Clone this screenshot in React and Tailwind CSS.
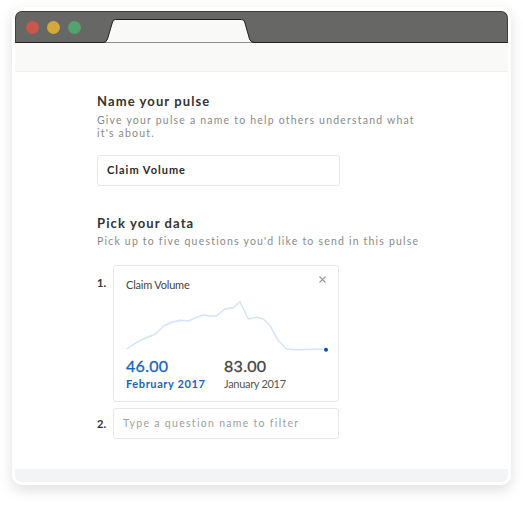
import React from "react";

const font = { fontFamily: "Lato, 'Open Sans', sans-serif" };

const chartPoints = [
  [0.7, 52], [10.7, 45.3], [17.3, 42], [27.3, 38], [30.7, 36], [37.3, 29.3],
  [45.7, 25.3], [54, 23.3], [62.3, 24], [70.7, 20.3], [77.3, 18], [85.7, 19.3],
  [90.7, 18.7], [99, 12], [107.3, 10.7], [114, 4.7], [122.3, 22], [130.7, 20.3],
  [137.3, 22], [144, 28.7], [152.3, 43.7], [160.7, 52], [170.7, 52.7], [197.3, 52],
];

function TitleBar() {
  return (
    <div className="flex h-[32px] items-stretch rounded-t-[7px] border border-b-0 border-[#3f3f3d] bg-[#676765] shadow-[inset_0_-1px_0_#222]">
      <div className="flex items-center gap-[8px] pl-[10px] pb-[1px]">
        <span className="h-[13px] w-[13px] rounded-full bg-[#c9574a]" />
        <span className="h-[13px] w-[13px] rounded-full bg-[#d3a93a]" />
        <span className="h-[13px] w-[13px] rounded-full bg-[#52a36f]" />
      </div>
      <svg width="152" height="24" viewBox="0 0 152 24" className="ml-[22px] self-end">
        <path
          d="M0 23.5 Q3.5 23.5 4.5 20 L9.5 3 Q10.2 0.5 12.5 0.5 L138.5 0.5 Q141 0.5 141.7 3 L146.5 20 Q147.5 23.5 151.5 23.5 Z"
          fill="#f9f9f7"
        />
        <path
          d="M0 23.5 Q3.5 23.5 4.5 20 L9.5 3 Q10.2 0.5 12.5 0.5 L138.5 0.5 Q141 0.5 141.7 3 L146.5 20 Q147.5 23.5 151.5 23.5"
          fill="none"
          stroke="#222"
          strokeWidth="1"
        />
      </svg>
    </div>
  );
}

function Chart() {
  const d = chartPoints.map((p, i) => `${i ? "L" : "M"}${p[0]} ${p[1]}`).join(" ");
  return (
    <svg width="203" height="56" viewBox="0 0 203 56" className="mt-[5px] block">
      <path d={d} fill="none" stroke="#d3e4f6" strokeWidth="1.5" strokeLinejoin="round" />
      <circle cx="200" cy="52.7" r="2" fill="#0b4fa8" />
    </svg>
  );
}

export default function App() {
  return (
    <div className="min-h-[513px] bg-white pt-[7px] pl-[12px]" style={font}>
      <div className="w-[499px] rounded-[10px] bg-white px-[3px] pt-[4px] pb-[3px] shadow-[0_5px_14px_rgba(0,0,0,0.13)]">
        <TitleBar />
        <div className="h-[29px] border-b border-[#f1f1ef] bg-[#f9f9f7]" />

        <div className="h-[397px] bg-white pl-[82px] pt-[21px]">
          <div className="text-[13px] font-bold leading-[16px] tracking-[1.1px] text-[#333]">
            Name your pulse
          </div>
          <div className="mt-[5px] w-[332px] text-[10.5px] leading-[12.5px] tracking-[1.2px] text-[#8a8a8a]">
            Give your pulse a name to help others understand what it's about.
          </div>
          <div className="mt-[16px] flex h-[31px] w-[243px] items-center rounded-[3px] border border-[#e4e8ea] pl-[9px] text-[11px] font-bold tracking-[1px] text-[#2a2a2a]">
            Claim Volume
          </div>

          <div className="mt-[29px] text-[13px] font-bold leading-[16px] tracking-[1.1px] text-[#333]">
            Pick your data
          </div>
          <div className="mt-[4px] text-[10.5px] leading-[13px] tracking-[1.2px] text-[#8a8a8a]">
            Pick up to five questions you'd like to send in this pulse
          </div>

          <div className="mt-[17px] flex">
            <div className="w-[16px] pt-[11px] text-[11px] font-bold leading-[14px] text-[#333]">1.</div>
            <div className="w-[226px] rounded-[3px] border border-[#e4e8ea] px-[12px] pt-[12px] pb-[10px]">
              <div className="flex items-start justify-between">
                <div className="text-[11px] leading-[14px] tracking-[-0.2px] text-[#444]">Claim Volume</div>
                <svg width="9" height="9" viewBox="0 0 9 9" className="mt-[-3px] mr-[-1px]">
                  <path d="M1.5 1.5 L7.5 7.5 M7.5 1.5 L1.5 7.5" stroke="#999" strokeWidth="1.1" />
                </svg>
              </div>
              <Chart />
              <div className="mt-[3px] flex">
                <div className="w-[98px]">
                  <div className="text-[16px] leading-[20px] tracking-[0.3px] text-[#1565c0] [-webkit-text-stroke:0.3px_#1565c0]">46.00</div>
                  <div className="mt-[1px] text-[11px] font-bold leading-[14px] tracking-[0.6px] text-[#1565c0]">
                    February 2017
                  </div>
                </div>
                <div>
                  <div className="text-[16px] leading-[20px] tracking-[0.3px] text-[#444] [-webkit-text-stroke:0.3px_#444]">83.00</div>
                  <div className="mt-[1px] text-[11px] leading-[14px] tracking-[-0.3px] text-[#555]">
                    January 2017
                  </div>
                </div>
              </div>
            </div>
          </div>

          <div className="mt-[6px] flex items-center">
            <div className="w-[16px] text-[11px] font-bold leading-[14px] text-[#333]">2.</div>
            <div className="flex h-[31px] w-[226px] items-center rounded-[3px] border border-[#e4e8ea] pl-[9px] text-[10.5px] tracking-[1.3px] text-[#a0a0a0]">
              Type a question name to filter
            </div>
          </div>
        </div>

        <div className="h-[13px] rounded-b-[7px] bg-[#f3f4f6]" />
      </div>
    </div>
  );
}
